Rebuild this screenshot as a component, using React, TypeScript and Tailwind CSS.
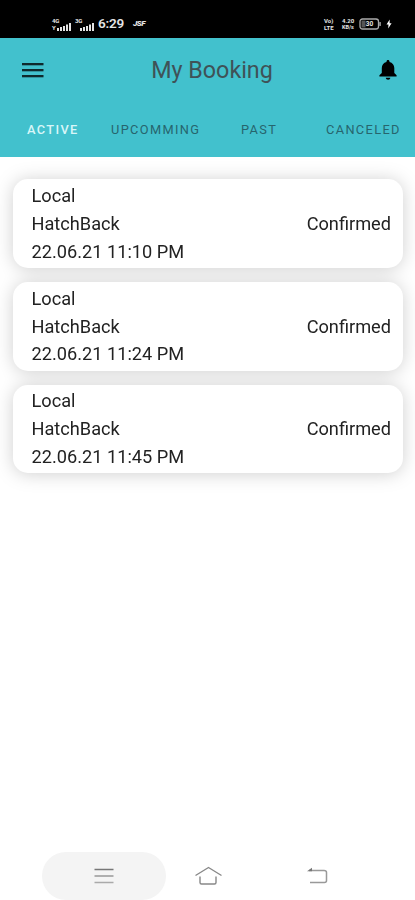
const TABS = [
  { label: "ACTIVE", className: "w-[84px] pl-[27px] font-medium text-[#d8f6f8]" },
  { label: "UPCOMMING", className: "w-[130px] pl-[27px] text-[#27656d]" },
  { label: "PAST", className: "w-[85px] pl-[27px] text-[#27656d]" },
  { label: "CANCELED", className: "pl-[27px] text-[#27656d]" },
];

const BOOKINGS = [
  { id: 1, type: "Local", car: "HatchBack", date: "22.06.21 11:10 PM", status: "Confirmed" },
  { id: 2, type: "Local", car: "HatchBack", date: "22.06.21 11:24 PM", status: "Confirmed" },
  { id: 3, type: "Local", car: "HatchBack", date: "22.06.21 11:45 PM", status: "Confirmed" },
];

function SignalBars() {
  return (
    <svg width="14" height="8" viewBox="0 0 14 8" fill="#e5e5e5">
      <rect x="0" y="5" width="2" height="3" />
      <rect x="3" y="4" width="2" height="4" />
      <rect x="6" y="3" width="2" height="5" />
      <rect x="9" y="1.5" width="2" height="6.5" />
      <rect x="12" y="0" width="2" height="8" />
    </svg>
  );
}

function StatusBar() {
  return (
    <div className="flex h-[38px] items-center bg-black pt-[10px] pr-[23px] pl-[52px] text-[#e5e5e5]">
      <div className="flex items-end">
        <div className="flex w-[9px] flex-col text-[6px] leading-[7px] font-bold tracking-tighter">
          <span>4G</span>
          <span>Y</span>
        </div>
        <div className="-ml-[4px]">
          <SignalBars />
        </div>
      </div>
      <div className="ml-[4px] flex items-end">
        <div className="w-[9px] pb-[7px] text-[6px] leading-[7px] font-bold tracking-tighter">3G</div>
        <div className="-ml-[4px]">
          <SignalBars />
        </div>
      </div>
      <span className="ml-[4px] w-[27px] text-[13.5px] leading-none font-semibold tracking-[-0.2px]">6:29</span>
      <span className="ml-[8px] text-[8px] leading-none font-black italic tracking-[-0.5px]">JSF</span>
      <div className="ml-auto flex items-center">
        <div className="flex w-[14px] flex-col text-[6px] leading-[7px] font-bold">
          <span>Vo)</span>
          <span>LTE</span>
        </div>
        <div className="ml-[4px] flex w-[15px] flex-col text-[6px] leading-[7px] font-bold">
          <span>4.20</span>
          <span className="text-[5.5px]">KB/s</span>
        </div>
        <svg className="ml-[2px]" width="23" height="12" viewBox="0 0 23 12">
          <rect x="1" y="1" width="18.5" height="10" rx="2.5" fill="none" stroke="#aaa" strokeWidth="1.3" />
          <rect x="2.5" y="2.5" width="4" height="7" fill="#555" />
          <rect x="20.3" y="4" width="1.5" height="4" rx=".5" fill="#aaa" />
          <text x="10.5" y="8.3" textAnchor="middle" fontSize="6.5" fontWeight="700" fill="#e5e5e5">
            30
          </text>
        </svg>
        <svg className="ml-[4px]" width="6" height="10" viewBox="0 0 6 10">
          <path d="M3.7.5.5 5.4h2L2.2 9.5 5.6 4.2h-2z" fill="#fff" />
        </svg>
      </div>
    </div>
  );
}

function Header() {
  return (
    <header className="h-[119px] bg-[#42c1cd]">
      <div className="flex h-[64px] items-center justify-between pr-[16px] pl-[22px]">
        <svg width="22" height="16" viewBox="0 0 22 16" fill="#0e2a2d">
          <rect x="0" y="1" width="21.5" height="2.3" />
          <rect x="0" y="7" width="21.5" height="2.3" />
          <rect x="0" y="13" width="21.5" height="2.3" />
        </svg>
        <h1 className="pt-[2px] pl-[3px] text-[23.3px] leading-none text-[#3f5257]">My Booking</h1>
        <svg width="22" height="24" viewBox="0 0 22 24" fill="#000">
          <path d="M11 2c-.9 0-1.5.6-1.5 1.5v.4C6.5 4.6 4.8 7 4.8 10v5L2.4 17.2v1.3h17.2v-1.3L17.3 15v-5c0-3-1.8-5.4-4.8-6.1v-.4C12.5 2.6 11.9 2 11 2z" />
          <path d="M8.8 19.8h4.5c0 1.1-1 2-2.2 2s-2.3-.9-2.3-2z" />
        </svg>
      </div>
      <nav className="flex h-[55px] items-center text-[12.8px] tracking-[1.35px] whitespace-nowrap">
        {TABS.map((tab) => (
          <span key={tab.label} className={`shrink-0 ${tab.className}`}>
            {tab.label}
          </span>
        ))}
      </nav>
    </header>
  );
}

export default function App() {
  return (
    <div className="flex h-[900px] w-[415px] flex-col overflow-hidden bg-white font-[Roboto,sans-serif]">
      <StatusBar />
      <Header />

      {/* One shadow for the whole list, so no card is shaded by its neighbour */}
      <main className="flex flex-1 flex-col gap-[14px] pt-[22.4px] pr-[12px] pl-[13px] drop-shadow-[0_1px_9px_rgba(0,0,0,0.19)]">
        {BOOKINGS.map((b) => (
          <div
            key={b.id}
            className="flex h-[88.6px] items-center justify-between rounded-[15px] bg-white pt-[0.6px] pr-[12px] pl-[18.5px] text-[18.2px] leading-[27.8px] text-[#222]"
          >
            <div>
              <p>{b.type}</p>
              <p>{b.car}</p>
              <p>{b.date}</p>
            </div>
            <p>{b.status}</p>
          </div>
        ))}
      </main>

      {/* System navigation */}
      <div className="flex h-[48px] items-center pl-[42px]">
        <div className="flex h-[48px] w-[124px] items-center justify-center rounded-full bg-[#f4f4f4]">
          <svg width="20" height="16" viewBox="0 0 20 16" strokeWidth="1.5">
            <path d="M.5 1.5h19" stroke="#777" />
            <path d="M.5 8h19" stroke="#999" />
            <path d="M.5 14.5h19" stroke="#aaa" />
          </svg>
        </div>
        <svg className="ml-[28px]" width="30" height="20" viewBox="0 0 30 20" fill="none" stroke="#888" strokeWidth="1.4" strokeLinejoin="round">
          <path d="M1.5 9.5 14.5 1.5l13 8" />
          <path d="M6 10.5v6c0 1 .5 1.5 1.5 1.5h13c1 0 1.5-.5 1.5-1.5v-6" />
        </svg>
        <svg className="ml-[83px]" width="22" height="18" viewBox="0 0 22 18" fill="none" stroke="#999" strokeWidth="1.5">
          <path d="M2 3.5h15c1.5 0 2.5.8 2.5 2v8c0 1.2-.8 2-2 2H3" />
          <path d="M0 4.2 5 .8v3.4z" fill="#777" stroke="none" />
        </svg>
      </div>
    </div>
  );
}
